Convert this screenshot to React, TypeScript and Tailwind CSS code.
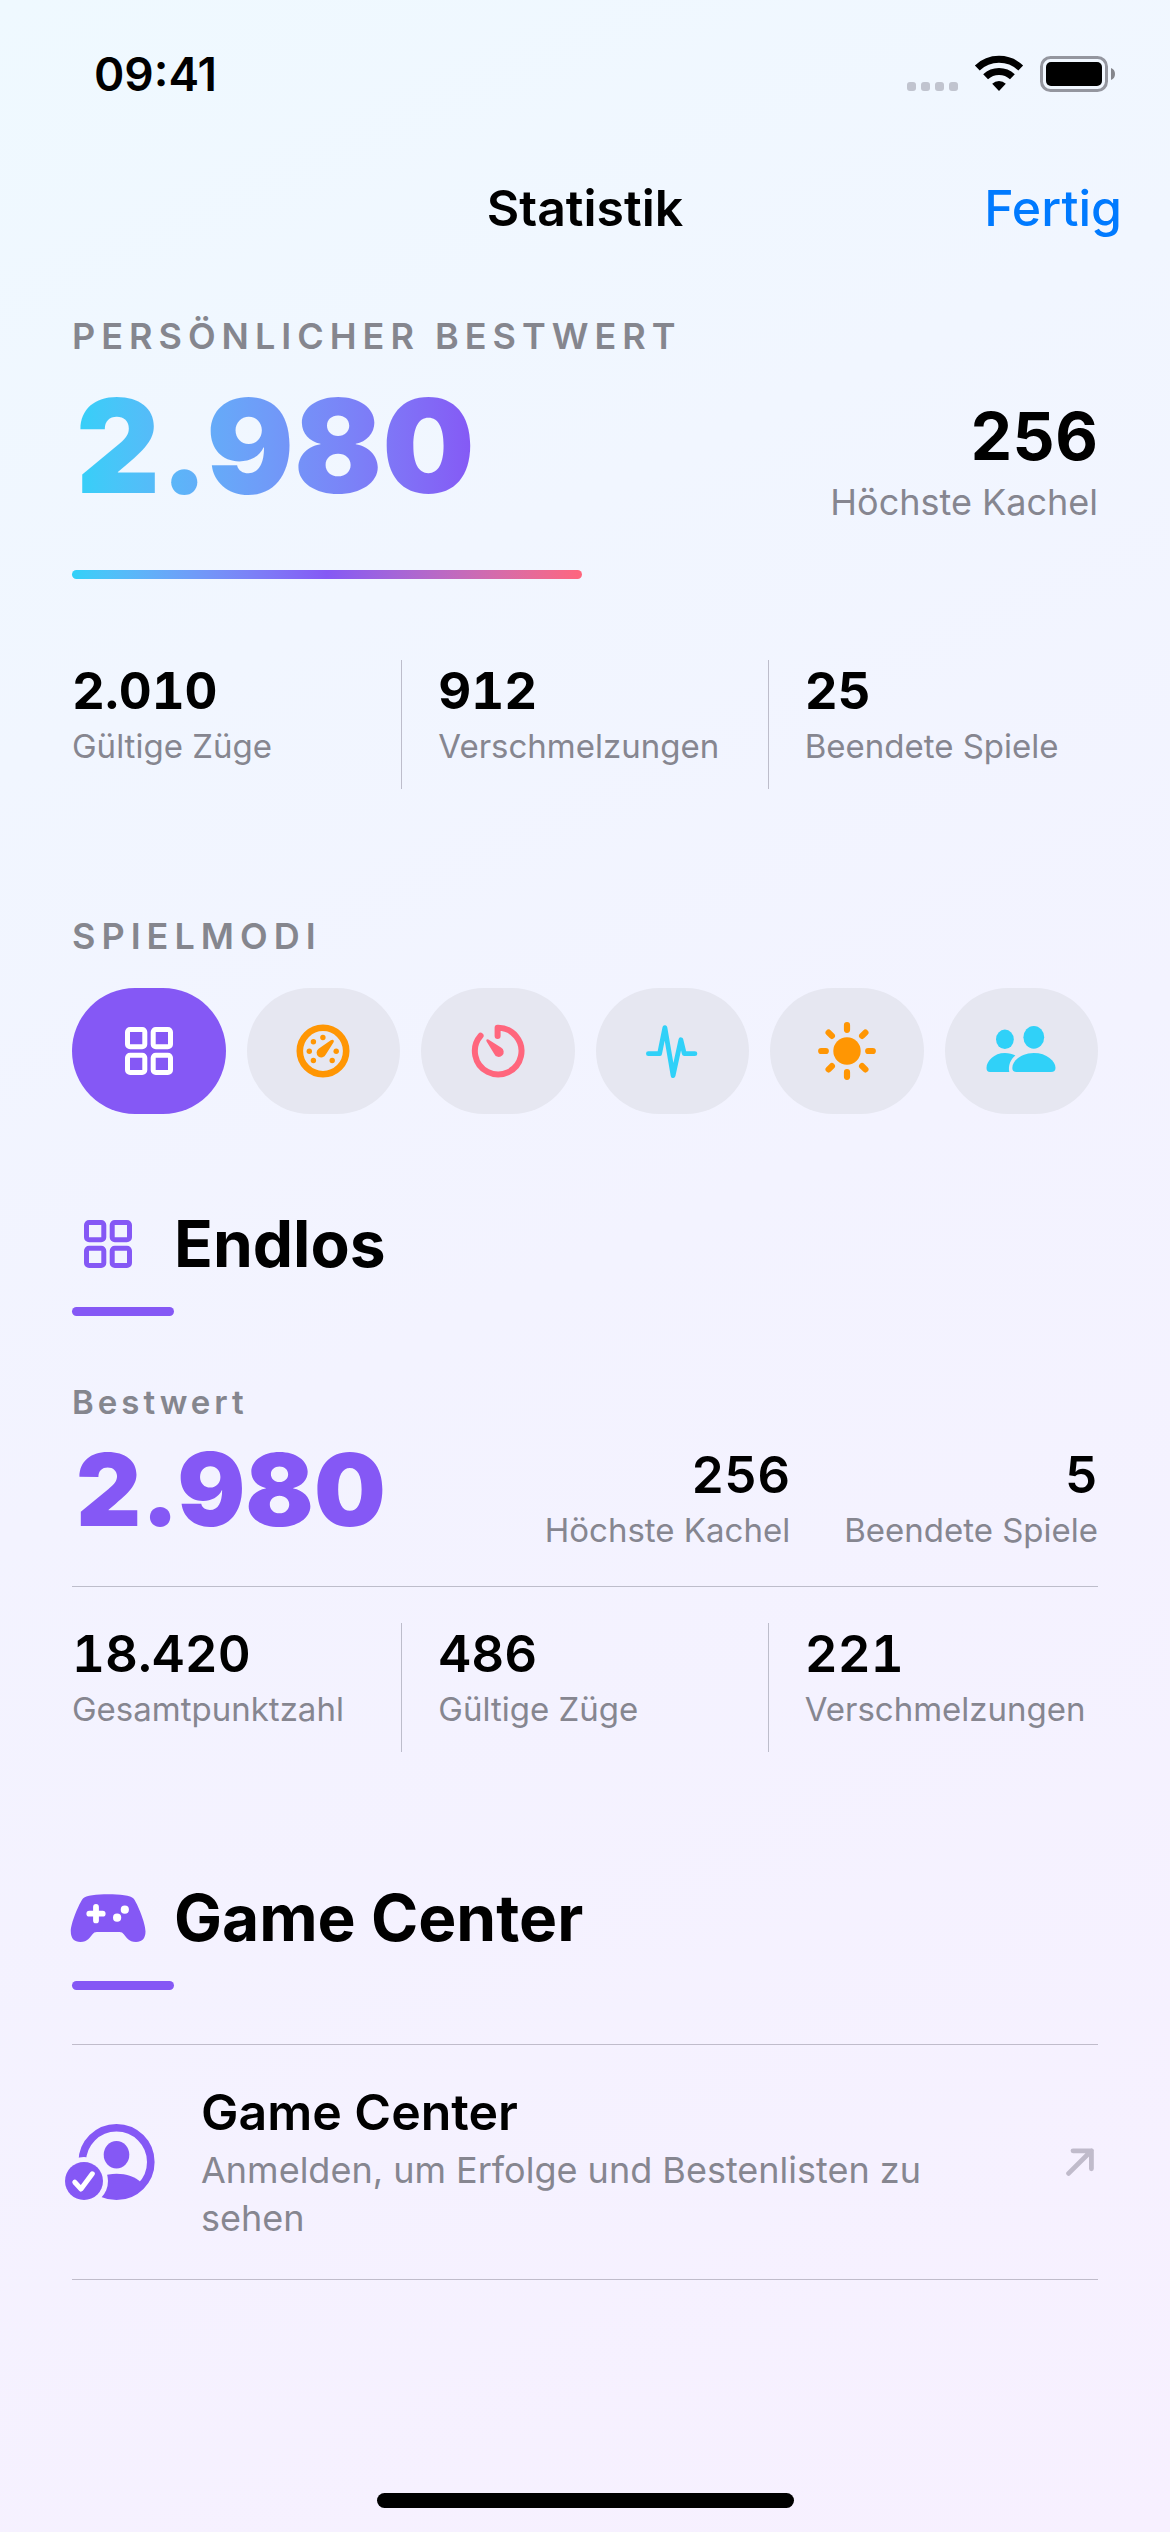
import { useState } from "react"
import type { ReactNode } from "react"

type Stat = { value: string; label: string }

const totals: Stat[] = [
  { value: "2.010", label: "Gültige Züge" },
  { value: "912", label: "Verschmelzungen" },
  { value: "25", label: "Beendete Spiele" },
]

const endless: Stat[] = [
  { value: "18.420", label: "Gesamtpunktzahl" },
  { value: "486", label: "Gültige Züge" },
  { value: "221", label: "Verschmelzungen" },
]

function GridIcon() {
  return (
    <svg width="48" height="48" viewBox="0 0 48 48" fill="none" stroke="currentColor" strokeWidth="5">
      <rect x="2.5" y="2.5" width="17.3" height="17.3" rx="2.6" />
      <rect x="28.2" y="2.5" width="17.3" height="17.3" rx="2.6" />
      <rect x="2.5" y="28.2" width="17.3" height="17.3" rx="2.6" />
      <rect x="28.2" y="28.2" width="17.3" height="17.3" rx="2.6" />
    </svg>
  )
}

function GaugeIcon() {
  return (
    <svg width="54" height="54" viewBox="0 0 54 54" fill="currentColor">
      <circle cx="27" cy="27" r="23.2" fill="none" stroke="currentColor" strokeWidth="6.6" />
      <circle cx="26.9" cy="13.5" r="2.7" />
      <circle cx="17.4" cy="17.8" r="2.7" />
      <circle cx="13.3" cy="27.2" r="2.7" />
      <circle cx="17.4" cy="36.5" r="2.7" />
      <circle cx="36.2" cy="36.5" r="2.7" />
      <circle cx="40.2" cy="27.2" r="2.7" />
      <path d="M22.6 24.8 L34.8 16.3 Q36.8 15.2 37.7 16.4 Q38.2 17.3 37.3 18.8 L29.8 30.6 A4.8 4.8 0 1 1 22.6 24.8 Z" />
    </svg>
  )
}

function TimerIcon() {
  return (
    <svg width="54" height="54" viewBox="0 0 54 54" fill="currentColor">
      <path
        d="M26.6 12 V3.8 A23.3 23.3 0 1 1 9.6 11.8"
        fill="none"
        stroke="currentColor"
        strokeWidth="6"
        strokeLinecap="round"
        strokeLinejoin="round"
      />
      <path d="M17.4 15.4 Q15.6 14.7 15.3 16.2 Q15.2 16.9 15.9 17.9 L23.3 29.9 A4.9 4.9 0 1 0 30 23.6 Z" />
    </svg>
  )
}

function PulseIcon() {
  return (
    <svg width="54" height="54" viewBox="0 0 54 54" fill="none" stroke="currentColor" strokeWidth="4.8" strokeLinecap="round" strokeLinejoin="round">
      <path d="M3.4 29.7 H14.6 L19.9 3.6 L28.1 51.6 L35.9 15.8 L39.3 29.7 H49.9" />
    </svg>
  )
}

function SunIcon() {
  return (
    <svg width="60" height="60" viewBox="-30 -30 60 60" fill="currentColor" stroke="currentColor" strokeLinecap="round">
      <circle r="13.7" stroke="none" />
      <path
        d="M0 -25.8 V-21.2 M0 25.8 V21.2 M-25.8 0 H-21.2 M25.8 0 H21.2 M-18.4 -18.4 L-15.1 -15.1 M18.4 -18.4 L15.1 -15.1 M-18.4 18.4 L-15.1 15.1 M18.4 18.4 L15.1 15.1"
        strokeWidth="6.2"
      />
    </svg>
  )
}

function PeopleIcon() {
  return (
    <svg width="70" height="54" viewBox="0 0 70 54" fill="currentColor">
      <ellipse cx="18.9" cy="15.3" rx="8.9" ry="9.7" />
      <ellipse cx="47.8" cy="13.3" rx="10.4" ry="11.4" />
      <path d="M0.5 44 C0.5 37 8 29 18.9 29 C23 29 26.5 30 29.4 31.4 C24.5 35.4 22 41.5 23.3 48 H4 Q0.5 48 0.5 44 Z" />
      <path d="M26.3 44 C26.3 37 35 29 47.8 29 C60.8 29 69.5 37 69.5 44 Q69.5 48 65 48 H30.5 Q26.3 48 26.3 44 Z" />
    </svg>
  )
}

function ControllerIcon() {
  return (
    <svg className="shrink-0" width="76" height="50" viewBox="0 0 76 50">
      <path
        d="M13 5.5 C15.5 2.5 27 1.2 38.2 1.2 C49.5 1.2 61 2.5 63.5 5.5 C67.5 10.5 75.5 30 75.5 38.5 C75.5 45.5 71.8 49 66 49 C58.5 49 56.5 44.5 53.8 41.3 Q52.3 39 49.6 39 H26.8 Q24 39 22.5 41.3 C19.8 44.5 17.8 49 10.4 49 C4.5 49 0.8 45.5 0.8 38.5 C0.8 30 9 10.5 13 5.5 Z"
        fill="currentColor"
      />
      <path d="M19.3 20.7 H32.7 M26 14 V27.4" stroke="white" strokeWidth="5.8" strokeLinecap="round" />
      <circle cx="54.8" cy="16.7" r="4.1" fill="white" />
      <circle cx="47.1" cy="24.7" r="4.1" fill="white" />
    </svg>
  )
}

function ProfileIcon() {
  return (
    <svg className="shrink-0" width="92" height="78" viewBox="0 0 92 78">
      <mask id="badge-gap">
        <rect width="92" height="78" fill="white" />
        <circle cx="20" cy="58" r="24" fill="black" />
      </mask>
      <clipPath id="profile-disc">
        <circle cx="52.5" cy="39" r="36" />
      </clipPath>
      <g mask="url(#badge-gap)" fill="currentColor">
        <circle cx="52.5" cy="39" r="34.3" fill="none" stroke="currentColor" strokeWidth="7.6" />
        <ellipse cx="52.5" cy="31.7" rx="12.8" ry="13.8" />
        <path d="M26 62 C36 47.5 66 47.5 77 59.5 V78 H26 Z" clipPath="url(#profile-disc)" />
      </g>
      <circle cx="20" cy="58" r="19" fill="currentColor" />
      <path d="M10.8 59.2 L17 66 L28.3 50.8" fill="none" stroke="white" strokeWidth="5" strokeLinecap="round" strokeLinejoin="round" />
    </svg>
  )
}

function StatusBar() {
  return (
    <div className="flex h-[148px] items-center justify-between pr-[54px] pl-[94px]">
      <span className="text-[46px] font-semibold">09:41</span>
      <svg width="210" height="38" viewBox="0 0 210 38">
        <g fill="#c1c4cf">
          <rect x="1" y="27" width="9" height="9" rx="3" />
          <rect x="15" y="27" width="9" height="9" rx="3" />
          <rect x="29" y="27" width="9" height="9" rx="3" />
          <rect x="43" y="27" width="9" height="9" rx="3" />
        </g>
        <g fill="none" stroke="black" strokeWidth="7">
          <path d="M71.3 13 A31.5 31.5 0 0 1 114.7 13" />
          <path d="M79.6 21.8 A19.5 19.5 0 0 1 106.4 21.8" />
        </g>
        <path d="M93 36 L86.2 28.8 A9.8 9.8 0 0 1 99.8 28.8 Z" fill="black" />
        <rect x="135.5" y="2.5" width="65" height="33" rx="9" fill="none" stroke="#94969f" strokeWidth="3" />
        <rect x="140" y="7" width="56" height="24" rx="5" fill="black" />
        <path d="M205 13 Q209 14.5 209 19 Q209 23.5 205 25 Z" fill="#85868c" />
      </svg>
    </div>
  )
}

function SectionTitle({ icon, children }: { icon: ReactNode; children: ReactNode }) {
  return (
    <div>
      <div className="flex items-center gap-[30px]">
        <div className="flex w-[72px] justify-center text-[#8558f5]">{icon}</div>
        <h2 className="text-[64px] leading-[80px] font-bold">{children}</h2>
      </div>
      <div className="mt-[23px] h-[9px] w-[102px] rounded-full bg-[#8558f5]" />
    </div>
  )
}

function StatBlock({ stat, bold = false }: { stat: Stat; bold?: boolean }) {
  return (
    <div className="flex flex-col gap-[5px]">
      <span className={`text-[51px] leading-[61px] tabular-nums ${bold ? "font-bold" : "font-semibold"}`}>{stat.value}</span>
      <span className="text-[33px] leading-[40px] whitespace-nowrap text-[#868690]">{stat.label}</span>
    </div>
  )
}

function StatRow({ stats, bold }: { stats: Stat[]; bold?: boolean }) {
  return (
    <div className="grid grid-cols-[1fr_1px_1fr_1px_1fr] gap-x-[36px]">
      {stats.map((stat, i) => (
        <div key={stat.label} className="contents">
          {i > 0 && <div className="bg-[#bdbdcb]" />}
          <div className="min-w-0 pb-[23px]">
            <StatBlock stat={stat} bold={bold} />
          </div>
        </div>
      ))}
    </div>
  )
}

const modes = [
  { name: "Endlos", color: "text-[#8558f5]", icon: <GridIcon /> },
  { name: "Tempo", color: "text-[#ff9603]", icon: <GaugeIcon /> },
  { name: "Zeit", color: "text-[#ff667d]", icon: <TimerIcon /> },
  { name: "Puls", color: "text-[#30d1f8]", icon: <PulseIcon /> },
  { name: "Täglich", color: "text-[#ff9603]", icon: <SunIcon /> },
  { name: "Duell", color: "text-[#30d1f8]", icon: <PeopleIcon /> },
]

export default function App() {
  const [mode, setMode] = useState(0)

  return (
    <div className="flex min-h-screen flex-col bg-[linear-gradient(155deg,#eff9ff,#f3f3ff_50%,#f7f0ff)] font-[Inter,sans-serif] text-black">
      <StatusBar />

      <header className="grid h-[120px] grid-cols-[1fr_auto_1fr] items-center px-[48px]">
        <h1 className="col-start-2 text-[50px] font-semibold">Statistik</h1>
        <button className="justify-self-end text-[50px] font-medium text-[#007aff]">Fertig</button>
      </header>

      <main className="flex flex-col px-[72px] pt-[46px]">
        <section>
          <h2 className="text-[36px] leading-[44px] font-semibold tracking-[6px] text-[#85868e]">PERSÖNLICHER BESTWERT</h2>
          <div className="mt-[22px] flex items-end justify-between">
            <span className="mb-3 bg-linear-to-r from-[#30d1f8] to-[#8558f5] bg-clip-text pl-1 text-[130px] leading-[132px] font-black text-transparent">
              2.980
            </span>
            <div className="flex flex-col gap-1 text-right">
              <span className="text-[66px] leading-[80px] font-bold tabular-nums">256</span>
              <span className="text-[36px] leading-[44px] text-[#868690]">Höchste Kachel</span>
            </div>
          </div>
          <div className="mt-[46px] h-[9px] w-[510px] rounded-full bg-linear-to-r from-[#30d1f8] via-[#8558f5] to-[#ff667d]" />
          <div className="mt-[81px]">
            <StatRow stats={totals} bold />
          </div>
        </section>

        <section className="mt-[125px]">
          <h2 className="text-[36px] leading-[44px] font-semibold tracking-[6px] text-[#85868e]">SPIELMODI</h2>
          <div className="mt-[30px] grid grid-cols-6 gap-[21px]">
            {modes.map((m, i) => (
              <button
                key={m.name}
                aria-label={m.name}
                aria-pressed={i === mode}
                onClick={() => setMode(i)}
                className={`flex h-[126px] items-center justify-center rounded-full ${i === mode ? "bg-[#8558f5] text-white" : `bg-[#e6e7f1] ${m.color}`}`}
              >
                {m.icon}
              </button>
            ))}
          </div>
        </section>

        <section className="mt-[90px]">
          <SectionTitle icon={<GridIcon />}>Endlos</SectionTitle>
          <h3 className="mt-[66px] text-[33px] leading-[40px] font-semibold tracking-[4px] text-[#85868e]">Bestwert</h3>
          <div className="mt-[17px] flex items-end justify-between">
            <span className="mb-[11px] pl-1 text-[101px] leading-[100px] font-black text-[#8558f5]">2.980</span>
            <div className="flex gap-[54px] text-right">
              <StatBlock stat={{ value: "256", label: "Höchste Kachel" }} />
              <StatBlock stat={{ value: "5", label: "Beendete Spiele" }} />
            </div>
          </div>
          <hr className="mt-[36px] mb-[36px] border-[#bdbdcb]" />
          <StatRow stats={endless} />
        </section>

        <section className="mt-[126px]">
          <SectionTitle icon={<ControllerIcon />}>Game Center</SectionTitle>
          <button className="mt-[54px] flex w-full items-center border-y border-[#c0bccb] py-[37px] text-left">
            <span className="flex w-[76px] shrink-0 justify-center text-[#8558f5]">
              <ProfileIcon />
            </span>
            <span className="ml-[53px] flex flex-1 flex-col gap-1">
              <span className="text-[50px] leading-[60px] font-semibold">Game Center</span>
              <span className="max-w-[760px] text-[36px] leading-[48px] text-[#868690]">
                Anmelden, um Erfolge und Bestenlisten zu sehen
              </span>
            </span>
            <svg className="shrink-0" width="32" height="32" viewBox="0 0 32 32" fill="none" stroke="#c0bbcb" strokeWidth="4.8" strokeLinecap="round" strokeLinejoin="round">
              <path d="M2.6 27.4 L25.4 4.8 M7 4.8 H25.4 V22.8" />
            </svg>
          </button>
        </section>
      </main>

      <div className="mx-auto mt-auto mb-6 h-[15px] w-[417px] rounded-full bg-black" />
    </div>
  )
}
